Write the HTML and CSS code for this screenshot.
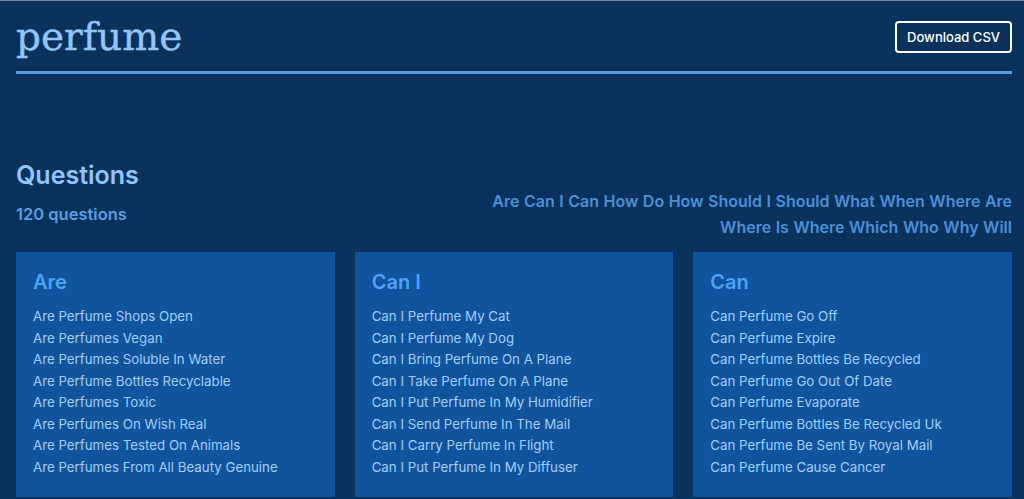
FILE: index.html
```html
<!DOCTYPE html>
<html>
<head>
<title>perfume - Questions</title>
<link rel="stylesheet" href="styles.css">
</head>

<body>
<div class="page">
  <div class="header">
    <h1 class="site-title">perfume</h1>
    <button class="csv-button">Download CSV</button>
  </div>

  <div class="questions-head">
    <div class="questions-left">
      <h2 class="questions-title">Questions</h2>
      <p class="questions-count">120 questions</p>
    </div>
    <div class="question-nav">
      <a href="#are">Are</a>
      <a href="#can-i">Can I</a>
      <a href="#can">Can</a>
      <a href="#how-do">How Do</a>
      <a href="#how-should-i">How Should I</a>
      <a href="#should">Should</a>
      <a href="#what">What</a>
      <a href="#when">When</a>
      <a href="#where-are">Where Are</a>
      <a href="#where-is">Where Is</a>
      <a href="#where">Where</a>
      <a href="#which">Which</a>
      <a href="#who">Who</a>
      <a href="#why">Why</a>
      <a href="#will">Will</a>
    </div>
  </div>

  <div class="card-grid">
    <div class="card" id="are">
      <h3 class="card-title">Are</h3>
      <ul class="card-list">
        <li>Are Perfume Shops Open</li>
        <li>Are Perfumes Vegan</li>
        <li>Are Perfumes Soluble In Water</li>
        <li>Are Perfume Bottles Recyclable</li>
        <li>Are Perfumes Toxic</li>
        <li>Are Perfumes On Wish Real</li>
        <li>Are Perfumes Tested On Animals</li>
        <li>Are Perfumes From All Beauty Genuine</li>
      </ul>
    </div>
    <div class="card" id="can-i">
      <h3 class="card-title">Can I</h3>
      <ul class="card-list">
        <li>Can I Perfume My Cat</li>
        <li>Can I Perfume My Dog</li>
        <li>Can I Bring Perfume On A Plane</li>
        <li>Can I Take Perfume On A Plane</li>
        <li>Can I Put Perfume In My Humidifier</li>
        <li>Can I Send Perfume In The Mail</li>
        <li>Can I Carry Perfume In Flight</li>
        <li>Can I Put Perfume In My Diffuser</li>
      </ul>
    </div>
    <div class="card" id="can">
      <h3 class="card-title">Can</h3>
      <ul class="card-list">
        <li>Can Perfume Go Off</li>
        <li>Can Perfume Expire</li>
        <li>Can Perfume Bottles Be Recycled</li>
        <li>Can Perfume Go Out Of Date</li>
        <li>Can Perfume Evaporate</li>
        <li>Can Perfume Bottles Be Recycled Uk</li>
        <li>Can Perfume Be Sent By Royal Mail</li>
        <li>Can Perfume Cause Cancer</li>
      </ul>
    </div>
  </div>
</div>
</body>

</html>
```

FILE: styles.css
```css
body{
  margin: 0;
  background-color: #0b325c;
  border-top: 1px solid #75879a;
  font-family: Inter, "Noto Sans", sans-serif;
}
.page{
  padding: 0 12px 0 16px;
}
.header{
  display: flex;
  justify-content: space-between;
  align-items: center;
  padding: 16px 0 14px;
  border-bottom: 3px solid #5a9ad8;
}
.site-title{
  margin: 0;
  font-family: "DejaVu Serif", serif;
  font-size: 39px;
  font-weight: normal;
  line-height: 40px;
  color: #93c5fb;
  -webkit-text-stroke: 0.4px #93c5fb;
}
.csv-button{
  background-color: transparent;
  color: white;
  border: 2px solid white;
  border-radius: 4px;
  padding: 0 10px;
  height: 32px;
  font-family: Inter, sans-serif;
  font-size: 13px;
  font-weight: 500;
  cursor: pointer;
}
.questions-head{
  display: flex;
  justify-content: space-between;
  align-items: flex-start;
  margin-top: 85px;
}
.questions-title{
  margin: 0;
  font-size: 25px;
  font-weight: 600;
  line-height: 32px;
  color: #93c5fb;
}
.questions-count{
  margin: 11px 0 0;
  font-size: 16.5px;
  font-weight: 600;
  line-height: 24px;
  color: #5a9ee0;
}
.question-nav{
  max-width: 540px;
  padding-top: 29px;
  text-align: right;
  font-size: 16px;
  font-weight: 600;
  line-height: 26px;
  word-spacing: 0.5px;
}
.question-nav a{
  color: #4b8fd8;
  text-decoration: none;
}
.card-grid{
  display: grid;
  grid-template-columns: repeat(3, 1fr);
  gap: 20px;
  margin-top: 12px;
}
.card{
  background-color: #10549d;
  padding: 16px 17px 19px;
}
.card-title{
  margin: 0 0 10px;
  font-size: 20px;
  font-weight: 600;
  line-height: 28px;
  color: #4ca3f5;
}
.card-list{
  list-style: none;
  margin: 0;
  padding: 0;
  font-size: 13.3px;
  line-height: 21.5px;
  color: #a3cdf6;
}
```
